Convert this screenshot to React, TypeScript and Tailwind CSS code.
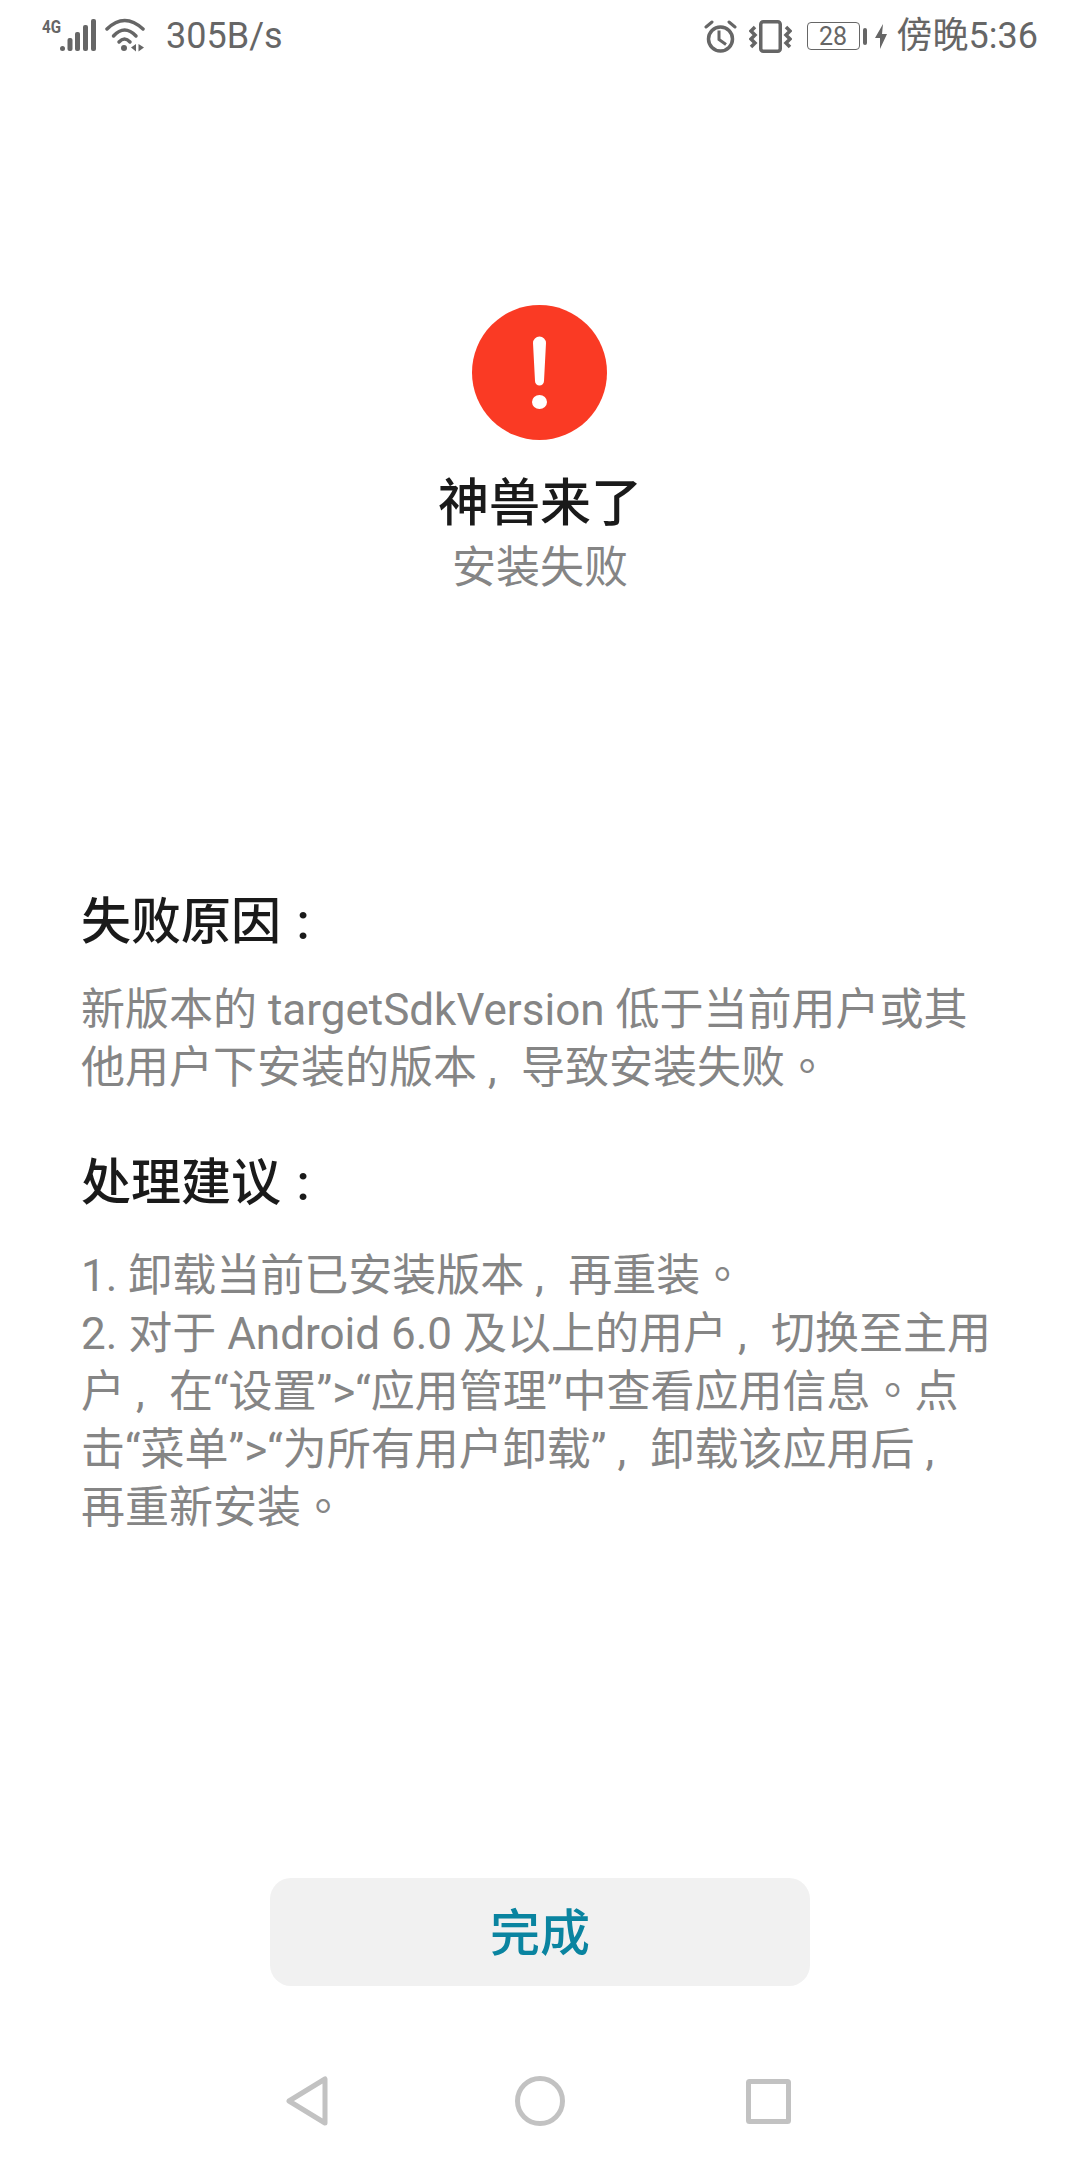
const fontStack = "font-['Roboto','Noto_Sans_CJK_SC',sans-serif]";

// the reference sets the comma as a latin one inside a full-width cell
function Comma() {
  return <span className="inline-block w-[44px] pl-[11px]">,</span>;
}

function Colon() {
  return <span className="inline-block w-[44px] text-center">:</span>;
}

// its full stop sits mid-cell, which is where the TC glyph has it
function Period() {
  return <span className="font-['Noto_Sans_CJK_TC',sans-serif] leading-[0]">。</span>;
}

function StatusBar() {
  return (
    <div className="flex h-[72px] items-center justify-between pl-[42px] pr-[42px] text-[#666666]">
      <div className="flex items-center">
        <svg width="104" height="52" viewBox="42 10 104 52" fill="#666666">
          <text x="42" y="33" fontSize="18" fontWeight="700" fontFamily="Roboto" textLength="19" lengthAdjust="spacingAndGlyphs">4G</text>
          <circle cx="62.5" cy="48.5" r="2.5" />
          <rect x="67.5" y="38" width="5" height="13" rx="2" />
          <rect x="75" y="32" width="5" height="19" rx="2" />
          <rect x="83" y="25" width="5" height="26" rx="2" />
          <rect x="91" y="19" width="5" height="32" rx="2" />
          <path d="M107 29 Q124.5 12 143 29" fill="none" stroke="#666666" strokeWidth="3.5" strokeLinecap="round" />
          <path d="M113.5 36 Q124.5 24 136 36" fill="none" stroke="#666666" strokeWidth="3.5" strokeLinecap="round" />
          <path d="M119 42 Q124.5 36 130 42" fill="none" stroke="#666666" strokeWidth="3.5" strokeLinecap="round" />
          <circle cx="124" cy="48" r="3" />
          <path d="M136 44 V51.5 L131 47.5 Z M138.5 44 L144 47.5 L138.5 51.5 Z" />
        </svg>
        <span className="ml-[20px] text-[36px] leading-none">305B/s</span>
      </div>
      <div className="flex items-center">
        <svg width="33" height="33" viewBox="0 0 33 33" fill="none" stroke="#666666" strokeWidth="3.5">
          <circle cx="16.5" cy="19" r="12" />
          <path d="M15 10.5 V19.5 L22 24.5" strokeWidth="3" />
          <path d="M2 7 L8 2 M31 7 L25 2" strokeLinecap="round" strokeWidth="3" />
        </svg>
        <svg className="ml-[12px]" width="43" height="33" viewBox="0 0 43 33" fill="none" stroke="#666666" strokeWidth="3.5">
          <rect x="11.75" y="1.75" width="19.5" height="29.5" rx="2.5" />
          <path d="M6 7 L2 11 L6 15 L2 19 L6 23 L2 27" strokeWidth="3.5" />
          <path d="M37 7 L41 11 L37 15 L41 19 L37 23 L41 27" strokeWidth="3.5" />
        </svg>
        <div className="ml-[15px] flex h-[28px] w-[53px] items-center justify-center rounded-[4px] border-[1.5px] border-[#666666] text-[25px] leading-none">
          28
        </div>
        <div className="ml-[3px] h-[17px] w-[4px] rounded-[2px] bg-[#666666]" />
        <svg className="ml-[8px]" width="12" height="25" viewBox="0 0 12 25" fill="#666666">
          <path d="M8 0 L0 14 H5 L5 25 L12 10 H7 Z" />
        </svg>
        <span className="ml-[10px] text-[36px] leading-none">傍晚5:36</span>
      </div>
    </div>
  );
}

function NavBar() {
  return (
    <div className="mt-[90px] flex h-[50px] items-center justify-center pr-[3px]">
      <svg width="42" height="50" viewBox="0 0 42 50" fill="none" stroke="#c2c2c2" strokeWidth="5" strokeLinejoin="round">
        <path d="M39 3 V47 L3 25 Z" />
      </svg>
      <svg className="ml-[187px]" width="50" height="50" viewBox="0 0 50 50" fill="none" stroke="#c2c2c2" strokeWidth="5">
        <circle cx="25" cy="25" r="22.5" />
      </svg>
      <svg className="ml-[181px]" width="45" height="45" viewBox="0 0 45 45" fill="none" stroke="#c2c2c2" strokeWidth="5" strokeLinejoin="round">
        <rect x="2.5" y="2.5" width="40" height="40" rx="1" />
      </svg>
    </div>
  );
}

export default function App() {
  return (
    <div className={`flex h-[2160px] w-[1080px] flex-col bg-white ${fontStack}`}>
      <StatusBar />

      <div className="mt-[233px] flex flex-col items-center">
        <svg className="mr-[1px]" width="135" height="135" viewBox="0 0 135 135">
          <circle cx="67.5" cy="67.5" r="67.5" fill="#fa3a24" />
          <path d="M61 38 a6.5 6.5 0 0 1 13 0 L72 76 a4.5 4.5 0 0 1 -9 0 Z" fill="#ffffff" />
          <ellipse cx="67.5" cy="97" rx="7.5" ry="7" fill="#ffffff" />
        </svg>
        <div className="mt-[34px] text-[51px] font-medium leading-[60px] text-[#1a1a1a]">神兽来了</div>
        <div className="mt-[5px] text-[44px] leading-[58px] text-[#858585]">安装失败</div>
      </div>

      <div className="mt-[295px] pl-[81px]">
        <h2 className="text-[50px] font-medium leading-[60px] text-[#1a1a1a]">
          失败原因
          <Colon />
        </h2>
        <p className="mt-[29px] text-[44px] leading-[58px] text-[#858585]">
          新版本的 targetSdkVersion 低于当前用户或其
          <br />
          他用户下安装的版本
          <Comma />
          导致安装失败
          <Period />
        </p>
        <h2 className="mt-[56px] text-[50px] font-medium leading-[60px] text-[#1a1a1a]">
          处理建议
          <Colon />
        </h2>
        <p className="mt-[34px] text-[44px] leading-[58px] text-[#858585]">
          1. 卸载当前已安装版本
          <Comma />
          再重装
          <Period />
          <br />
          2. 对于 Android 6.0 及以上的用户
          <Comma />
          切换至主用
          <br />
          户<Comma />在“设置”&gt;“应用管理”中查看应用信息
          <Period />点
          <br />
          击“菜单”&gt;“为所有用户卸载”
          <Comma />
          卸载该应用后
          <Comma />
          <br />
          再重新安装
          <Period />
        </p>
      </div>

      <div className="flex-1" />

      <button className="mx-auto flex h-[108px] w-[540px] items-center justify-center rounded-[21px] bg-[#f1f1f1] pt-[4px] text-[50px] font-medium text-[#0a84a0]">
        完成
      </button>

      <NavBar />
      <div className="h-[34px]" />
    </div>
  );
}
